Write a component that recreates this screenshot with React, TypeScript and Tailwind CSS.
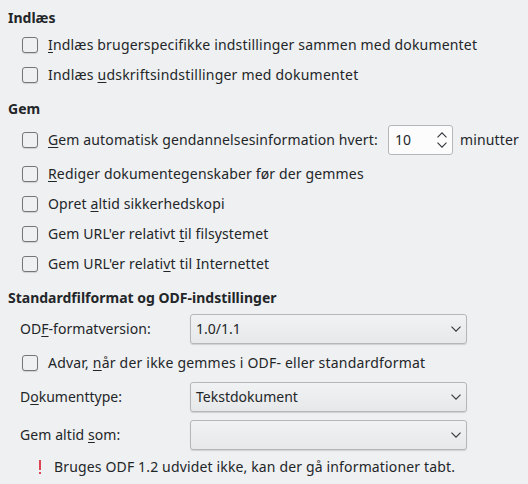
import React from "react";

function U({ children }: { children: React.ReactNode }) {
  return <span className="underline decoration-1 underline-offset-2 [text-decoration-skip-ink:none]">{children}</span>;
}

function Box() {
  return <span className="mr-[10px] h-4 w-4 shrink-0 rounded-[3px] border border-[#747779] bg-[#eff0f1] shadow-[0_1px_1px_#0002]" />;
}

function Check({ children, tracking }: { children: React.ReactNode; tracking: string }) {
  return (
    <label className="flex h-[30px] items-center pl-[22px]">
      <Box />
      <span className={tracking}>{children}</span>
    </label>
  );
}

function Chevron() {
  return (
    <svg width="10" height="6" viewBox="0 0 10 6" fill="none" stroke="#31363b" strokeWidth="1.1">
      <path d="M.5 .7 5 5.2 9.5 .7" />
    </svg>
  );
}

function Select({ value }: { value: string }) {
  return (
    <div className="flex h-[30px] w-[277px] items-center justify-between rounded-[3px] border border-[#b4b7b9] bg-linear-to-b from-[#f1f2f3] to-[#e7e8e9] pr-[5px] pl-[5px] shadow-[0_1px_1px_#0002]">
      <span>{value}</span>
      <Chevron />
    </div>
  );
}

export default function App() {
  return (
    <div className="h-[484px] w-[528px] overflow-hidden bg-[#eff0f1] font-['Noto_Sans',sans-serif] text-[14px] leading-5 whitespace-nowrap text-[#232629]">
      <h2 className="h-[30px] pt-2 pl-2 font-bold">Indlæs</h2>
      <Check tracking="tracking-[0.18px]"><U>I</U>ndlæs brugerspecifikke indstillinger sammen med dokumentet</Check>
      <Check tracking="tracking-[0.21px]">Indlæs <U>u</U>dskriftsindstillinger med dokumentet</Check>
      <h2 className="h-[31px] pt-[9px] pl-2 font-bold">Gem</h2>
      <div className="flex h-[38px] items-center">
        <div className="w-[388px] shrink-0">
          <Check tracking="tracking-[0.13px]"><U>G</U>em automatisk gendannelsesinformation hvert:</Check>
        </div>
        <div className="mr-[7px] flex h-[30px] w-[65px] shrink-0 items-center justify-between rounded-[3px] border border-[#b4b7b9] bg-[#fcfcfc] pr-[5px] pl-1.5">
          <span>10</span>
          <div className="flex flex-col gap-1">
            <svg width="10" height="6" viewBox="0 0 10 6" fill="none" stroke="#31363b" strokeWidth="1.1"><path d="M.5 5.3 5 .8 9.5 5.3" /></svg>
            <Chevron />
          </div>
        </div>
        <span className="tracking-[0.13px]">minutter</span>
      </div>
      <Check tracking="tracking-[0.15px]"><U>R</U>ediger dokumentegenskaber før der gemmes</Check>
      <Check tracking="tracking-[0.14px]">Opret <U>a</U>ltid sikkerhedskopi</Check>
      <Check tracking="tracking-[0.11px]">Gem URL'er relativt <U>t</U>il filsystemet</Check>
      <Check tracking="tracking-[0.13px]">Gem URL'er relati<U>v</U>t til Internettet</Check>
      <h2 className="h-[31px] pt-[9px] pl-2 font-bold">Standardfilformat og ODF-indstillinger</h2>
      <div className="flex h-[38px] items-center pl-5"><span className="w-[170px] tracking-[0.04px]">OD<U>F</U>-formatversion:</span><Select value="1.0/1.1" /></div>
      <Check tracking="tracking-[0.2px]">Advar, <U>n</U>år der ikke gemmes i ODF- eller standardformat</Check>
      <div className="flex h-[38px] items-center pl-5"><span className="w-[170px]">D<U>o</U>kumenttype:</span><Select value="Tekstdokument" /></div>
      <div className="flex h-[38px] items-center pl-5"><span className="w-[170px] tracking-[0.08px]">Gem altid <U>s</U>om:</span><Select value="" /></div>
      <div className="flex h-[26px] items-center pl-[39px]">
        <svg className="mr-[13px]" width="2" height="16" viewBox="0 0 2 16" fill="#da4453"><path d="M0 1h2v10H0zM0 13h2v2H0z" /></svg>
        <span className="tracking-[0.15px]">Bruges ODF 1.2 udvidet ikke, kan der gå informationer tabt.</span>
      </div>
    </div>
  );
}
